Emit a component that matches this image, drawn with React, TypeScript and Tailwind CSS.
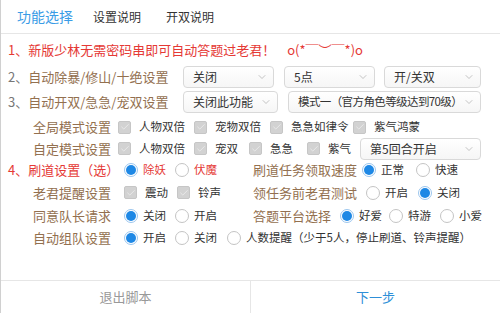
import React from 'react';
import { ChevronDown, Check } from 'lucide-react';

const Select = ({ text, className }: { text: string; className: string }) => (
  <div
    className={`flex h-[22px] items-center justify-between rounded-[4px] border border-[#d9d9d9] bg-gradient-to-b from-white to-[#f6f6f6] pl-[9px] pr-[5px] text-[12px] text-[#333] ${className}`}
  >
    <span className="whitespace-nowrap">{text}</span>
    <ChevronDown size={12} strokeWidth={1.4} className="shrink-0 text-[#aaa]" />
  </div>
);

const Box = ({ label, className }: { label: string; className: string }) => (
  <div className={`flex items-center gap-[8px] ${className}`}>
    <span className="flex h-[13px] w-[13px] shrink-0 items-center justify-center rounded-[2px] border border-[#c6c6c6] bg-[#d2d2d2]">
      <Check size={10} strokeWidth={2.4} className="text-[#e9e9e9]" />
    </span>
    <span className="whitespace-nowrap text-[11.5px] text-[#333]">{label}</span>
  </div>
);

const Radio = ({ label, on, red, className }: { label: string; on?: boolean; red?: boolean; className: string }) => (
  <div className={`flex items-center gap-[5px] ${className}`}>
    <span
      className={`flex h-[14px] w-[14px] shrink-0 items-center justify-center rounded-full border ${
        on ? 'border-[#9cc6ee]' : 'border-[#c4c4c4]'
      } bg-white`}
    >
      {on && <span className="h-[10px] w-[10px] rounded-full bg-[#1e88e5]" />}
    </span>
    <span className={`whitespace-nowrap text-[11.5px] ${red ? 'text-[#e53935]' : 'text-[#333]'}`}>{label}</span>
  </div>
);

const Label = ({ text, className }: { text: string; className: string }) => (
  <div className={`whitespace-nowrap text-[13px] text-[#93704f] ${className}`}>{text}</div>
);

export default function App() {
  return (
    <div className="flex h-[313px] w-[500px] flex-col overflow-hidden border-l border-[#d0d0d0] bg-white font-['Noto_Sans_CJK_SC',sans-serif]">
      <div className="flex h-[34px] shrink-0 items-center border-b border-[#e6e6e6] pl-[16px]">
        <span className="text-[14px] text-[#3a9ce6]">功能选择</span>
        <span className="ml-[20px] text-[12px] text-[#333]">设置说明</span>
        <span className="ml-[25px] text-[12px] text-[#333]">开双说明</span>
      </div>

      <div className="flex flex-1 flex-col px-[7px]">
        <div className="flex h-[31px] items-center text-[13px] text-[#e53935]">
          <span className="whitespace-nowrap">1、新版少林无需密码串即可自动答题过老君！</span>
          <span className="ml-[12px] whitespace-nowrap">o(*￣︶￣*)o</span>
        </div>

        <div className="flex h-[24px] items-center">
          <div className="w-[175px] whitespace-nowrap text-[13px] text-[#93704f]">
            <span className="text-[#777]">2、</span>自动除暴/修山/十绝设置
          </div>
          <Select text="关闭" className="w-[91px]" />
          <Select text="5点" className="ml-[10px] w-[91px]" />
          <Select text="开/关双" className="ml-[9px] w-[97px]" />
        </div>

        <div className="flex h-[26px] items-center">
          <div className="w-[175px] whitespace-nowrap text-[13px] text-[#93704f]">
            <span className="text-[#777]">3、</span>自动开双/急急/宠双设置
          </div>
          <Select text="关闭此功能" className="w-[95px]" />
          <Select text="模式一（官方角色等级达到70级）" className="ml-[10px] w-[193px] !text-[11.5px] tracking-[-0.6px]" />
        </div>

        <div className="flex h-[24px] items-center">
          <Label text="全局模式设置" className="w-[110px] pl-[25px]" />
          <Box label="人物双倍" className="w-[76px]" />
          <Box label="宠物双倍" className="w-[76px]" />
          <Box label="急急如律令" className="w-[83px]" />
          <Box label="紫气鸿蒙" className="" />
        </div>

        <div className="flex h-[19px] items-center">
          <Label text="自定模式设置" className="w-[110px] pl-[25px]" />
          <Box label="人物双倍" className="w-[76px]" />
          <Box label="宠双" className="w-[55px]" />
          <Box label="急急" className="w-[58px]" />
          <Box label="紫气" className="w-[53px]" />
          <Select text="第5回合开启" className="w-[121px]" />
        </div>

        <div className="flex h-[23px] items-center">
          <div className="w-[116px] whitespace-nowrap text-[13px] text-[#e53935]">4、刷道设置（选）</div>
          <Radio label="除妖" on red className="w-[51px]" />
          <Radio label="伏魔" red className="w-[78px]" />
          <Label text="刷道任务领取速度" className="w-[109px]" />
          <Radio label="正常" on className="w-[54px]" />
          <Radio label="快速" className="" />
        </div>

        <div className="flex h-[23px] items-center">
          <Label text="老君提醒设置" className="w-[116px] pl-[25px]" />
          <Box label="震动" className="w-[53px] gap-[6px]" />
          <Box label="铃声" className="w-[76px] gap-[3px]" />
          <Label text="领任务前老君测试" className="w-[113px]" />
          <Radio label="开启" className="w-[52px]" />
          <Radio label="关闭" on className="" />
        </div>

        <div className="flex h-[23px] items-center">
          <Label text="同意队长请求" className="w-[116px] pl-[25px]" />
          <Radio label="关闭" on className="w-[51px]" />
          <Radio label="开启" className="w-[78px]" />
          <Label text="答题平台选择" className="w-[87px]" />
          <Radio label="好爱" on className="w-[49px]" />
          <Radio label="特游" className="w-[51px]" />
          <Radio label="小爱" className="" />
        </div>

        <div className="flex h-[22px] items-center">
          <Label text="自动组队设置" className="w-[116px] pl-[25px]" />
          <Radio label="开启" on className="w-[51px]" />
          <Radio label="关闭" className="w-[52px]" />
          <Radio label="人数提醒（少于5人，停止刷道、铃声提醒）" className="" />
        </div>
      </div>

      <div className="flex h-[33px] shrink-0 border-t border-[#e6e6e6]">
        <button className="flex flex-1 items-center justify-center text-[13px] text-[#999]">退出脚本</button>
        <button className="flex flex-1 items-center justify-center border-l border-[#e6e6e6] text-[13px] text-[#2e8fd8]">
          下一步
        </button>
      </div>
    </div>
  );
}
